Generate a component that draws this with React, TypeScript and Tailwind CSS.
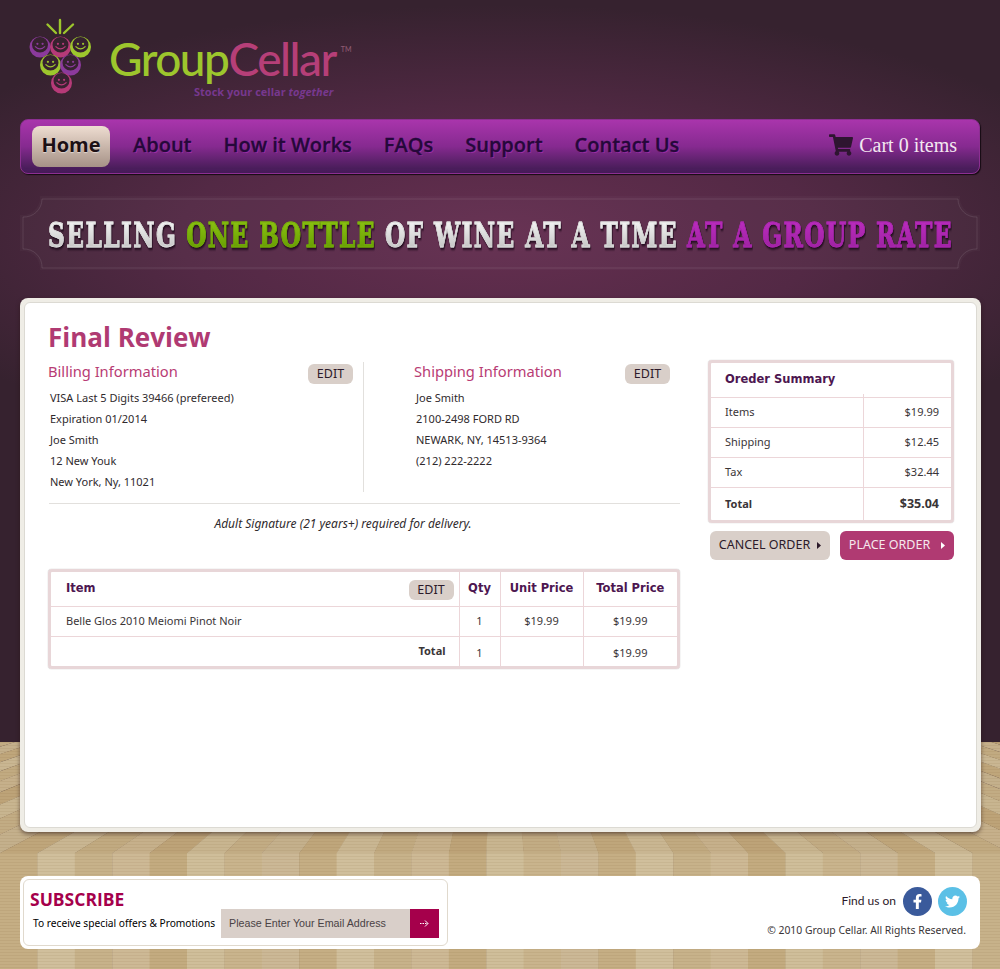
import { FaFacebookF, FaTwitter, FaShoppingCart } from "react-icons/fa";

const navItems = ["About", "How it Works", "FAQs", "Support", "Contact Us"];
const billing = [
  "VISA Last 5 Digits 39466 (prefereed)",
  "Expiration 01/2014",
  "Joe Smith",
  "12 New Youk",
  "New York, Ny, 11021",
];
const shipping = ["Joe Smith", "2100-2498 FORD RD", "NEWARK, NY, 14513-9364", "(212) 222-2222"];
const summary = [
  { label: "Items", value: "$19.99" },
  { label: "Shipping", value: "$12.45" },
  { label: "Tax", value: "$32.44" },
];

const floorColors = ["#d0bf9c", "#c7b28a", "#cdb995", "#c3ab80", "#cfbe9a", "#c9b48d", "#cbb896", "#c5ae84"];
const floorColumns = Array.from({ length: 70 }, (_, n) => n - 20);

function Floor() {
  const step = 37.4;
  const topX = (x: number, k: number) => 500 + (x - 500) * k;
  return (
    <svg className="absolute left-0 top-[742px]" width="1000" height="227" viewBox="0 0 1000 227">
      <defs>
        <pattern id="grain" width="4" height="3" patternUnits="userSpaceOnUse">
          <rect width="4" height="1" fill="#7a5c28" opacity="0.09" />
        </pattern>
      </defs>
      {floorColumns.map((i) => {
        const x0 = i * step;
        const x1 = (i + 1) * step;
        const fill = floorColors[(((i + 7) % 8) + 8) % 8];
        return (
          <g key={i}>
            <rect x={x0} y="111" width={step + 0.5} height="116" fill={fill} />
            <polygon
              points={`${topX(x0, 0.58)},0 ${topX(x1, 0.58) + 0.5},0 ${x1 + 0.5},111 ${x0},111`}
              fill={fill}
            />
          </g>
        );
      })}
      <rect width="1000" height="111" fill="#6b4a10" opacity="0.07" />
      <rect width="1000" height="227" fill="url(#grain)" />
    </svg>
  );
}

function Grape({ x, y, color }: { x: number; y: number; color: string }) {
  return (
    <g transform={`translate(${x} ${y})`} fill={color}>
      <path
        fillRule="evenodd"
        d="M-10.5 0a10.5 10.5 0 1 0 21 0a10.5 10.5 0 1 0 -21 0ZM-8 -2.2a8 7.8 0 1 1 16 0a8 7.8 0 1 1 -16 0Z"
      />
      <circle cx="-2.6" cy="-3.2" r="1.1" />
      <circle cx="2.6" cy="-3.2" r="1.1" />
      <path d="M-5 -0.6Q0 4.4 5 -0.6" fill="none" stroke={color} strokeWidth="1.3" />
    </g>
  );
}

function Logo() {
  return (
    <div className="flex h-[119px] items-start pl-[28px] pt-[15px]">
      <svg width="66" height="84" viewBox="28 15 66 84" className="shrink-0">
        <g stroke="#9dc62d" strokeWidth="2.4" strokeLinecap="round">
          <path d="M60 20V33" />
          <path d="M47.5 24.5L56 33" />
          <path d="M73 24.5L64 33" />
        </g>
        <Grape x={40} y={47} color="#8b3a9c" />
        <Grape x={60.5} y={47} color="#b63a78" />
        <Grape x={80.5} y={47} color="#9dc62d" />
        <Grape x={50.5} y={65} color="#9dc62d" />
        <Grape x={70.5} y={65} color="#8b3a9c" />
        <Grape x={61.5} y={83} color="#b63a78" />
      </svg>
      <div className="ml-[15px] mt-[18px] w-[250px]">
        <div className="flex h-[52px] items-start font-['Lato',sans-serif] text-[46px] font-medium leading-[52px] tracking-[-1.5px]">
          <span className="text-[#9dc62d]">Group</span>
          <span className="text-[#b63f78]">Cellar</span>
          <span className="ml-[5px] mt-[12px] text-[7px] leading-[8px] tracking-normal text-[#8f5a72]">TM</span>
        </div>
        <div className="ml-[85px] whitespace-nowrap font-['Open_Sans',sans-serif] text-[11px] font-bold leading-[14px] text-[#77388e]">
          Stock your cellar <span className="italic">together</span>
        </div>
      </div>
    </div>
  );
}

function Nav() {
  return (
    <nav className="mx-5 flex h-[55px] items-center rounded-lg border border-[#8c2f92] bg-gradient-to-b from-[#a935ac] via-[#862a90] to-[#3e1a50] pl-[11px] pr-[22px] shadow-[1px_1px_1px_#140a12,inset_0_-4px_0_rgba(80,30,100,0.35)]">
      <a className="flex h-[41px] w-[78px] items-center justify-center rounded-lg bg-gradient-to-b from-[#eeddd1] to-[#a69287] pb-[3px] font-['Open_Sans',sans-serif] text-[20px] font-bold text-[#1c1015] [text-shadow:0_1px_1px_rgba(255,255,255,0.5)]">
        Home
      </a>
      <div className="ml-[23px] flex gap-[32px] pb-[3px]">
        {navItems.map((item) => (
          <a
            key={item}
            className="whitespace-nowrap font-['Open_Sans',sans-serif] text-[20px] font-semibold text-[#25083a] [-webkit-text-stroke:0.3px_#25083a] [text-shadow:1px_1px_0_#9b2ea4]"
          >
            {item}
          </a>
        ))}
      </div>
      <div className="ml-auto flex items-center pb-[3px]">
        <FaShoppingCart className="mr-[6px] text-[24px] text-[#2e1530]" />
        <span className="whitespace-nowrap font-['Liberation_Serif',serif] text-[20px] text-[#f3e8f0]">Cart 0 items</span>
      </div>
    </nav>
  );
}

function Banner() {
  const clip = "bg-clip-text text-transparent";
  return (
    <div className="relative mx-5 mt-[22px] flex h-[74px] items-center justify-center overflow-hidden pt-[4px]">
      <svg className="absolute inset-0" width="960" height="74" viewBox="0 0 960 74">
        <path
          d="M20 0H940a18 18 0 0 0 20 19V55a18 18 0 0 0 -20 19H20a18 18 0 0 0 -20 -19V19a18 18 0 0 0 20 -19Z"
          fill="#ffffff"
          fillOpacity="0.025"
        />
        <path
          d="M22 3H938a18 18 0 0 0 19 18V53a18 18 0 0 0 -19 19H22a18 18 0 0 0 -19 -19V21a18 18 0 0 0 19 -18Z"
          fill="none"
          stroke="#ffffff"
          strokeOpacity="0.1"
        />
      </svg>
      <div className="relative flex shrink-0 scale-x-[0.686] gap-[13px] whitespace-nowrap font-['DejaVu_Serif',serif] text-[34px] font-bold leading-[40px] tracking-[2px] drop-shadow-[1px_2px_1px_rgba(20,5,20,0.8)]">
        <span className={`bg-gradient-to-b from-[#ffffff] to-[#b9b9b9] ${clip} [-webkit-text-stroke:0.8px_#dcdcdc]`}>SELLING</span>
        <span className={`bg-gradient-to-b from-[#93c915] to-[#5f9600] ${clip} [-webkit-text-stroke:0.8px_#76ae0a]`}>ONE BOTTLE</span>
        <span className={`bg-gradient-to-b from-[#ffffff] to-[#b9b9b9] ${clip} [-webkit-text-stroke:0.8px_#dcdcdc]`}>OF WINE AT A TIME</span>
        <span className={`bg-gradient-to-b from-[#c02ec4] to-[#98209c] ${clip} [-webkit-text-stroke:0.8px_#ab27af]`}>AT A GROUP RATE</span>
      </div>
    </div>
  );
}

function EditButton() {
  return (
    <span className="flex h-[20px] w-[45px] items-center justify-center rounded-md bg-[#d9cfc9] text-[12.5px] text-[#2c1a2a]">
      EDIT
    </span>
  );
}

function InfoBlock({ title, lines }: { title: string; lines: string[] }) {
  return (
    <div>
      <div className="flex items-start justify-between">
        <h2 className="-mt-[1px] text-[14.7px] leading-[20px] text-[#b83c74]">{title}</h2>
        <div className="mt-[2px]">
          <EditButton />
        </div>
      </div>
      <div className="ml-[2px] mt-[3px] text-[11px] leading-[21px] text-[#2f2a2d]">
        {lines.map((line) => (
          <div key={line} className="whitespace-nowrap">
            {line}
          </div>
        ))}
      </div>
    </div>
  );
}

function ItemsTable() {
  const head = "border-b border-l border-[#ecd6d9] text-center font-['DejaVu_Sans',sans-serif] text-[11.5px] font-bold text-[#4d1650]";
  const cell = "border-l border-t border-[#ecd6d9] text-center text-[11px] text-[#3a3537]";
  return (
    <div className="mt-[37px] w-[632px] rounded-sm border-[3px] border-[#e8d6d8] shadow-[0_0_1px_#999]">
      <table className="w-full table-fixed border-collapse">
        <colgroup>
          <col className="w-[408px]" />
          <col className="w-[41px]" />
          <col className="w-[83px]" />
          <col />
        </colgroup>
        <tbody>
          <tr className="h-[34px]">
            <td className="border-b border-[#ecd6d9] pl-[15px] pr-[5px] font-['DejaVu_Sans',sans-serif] text-[11.5px] font-bold text-[#4d1650]">
              <div className="flex items-center justify-between">
                <span>Item</span>
                <span className="mt-[3px] font-['Noto_Sans',sans-serif] font-normal">
                  <EditButton />
                </span>
              </div>
            </td>
            <td className={head}>Qty</td>
            <td className={head}>Unit Price</td>
            <td className={head}>Total Price</td>
          </tr>
          <tr className="h-[30px]">
            <td className="pl-[15px] text-[11px] text-[#3a3537]">Belle Glos 2010 Meiomi Pinot Noir</td>
            <td className={cell}>1</td>
            <td className={cell}>$19.99</td>
            <td className={cell}>$19.99</td>
          </tr>
          <tr className="h-[30px]">
            <td className="border-t border-[#ecd6d9] pr-[13px] text-right text-[11px] font-bold text-[#3a3537]">Total</td>
            <td className={`${cell} pt-[3px]`}>1</td>
            <td className={cell}></td>
            <td className={`${cell} pt-[3px]`}>$19.99</td>
          </tr>
        </tbody>
      </table>
    </div>
  );
}

function OrderSummary() {
  return (
    <div>
      <div className="w-[246px] rounded-sm border-[3px] border-[#e8d6d8] shadow-[0_0_1px_#aaa]">
        <div className="relative flex h-[34px] items-center pl-[14px] font-['DejaVu_Sans',sans-serif] text-[11.5px] font-bold text-[#4d1650]">
          Oreder Summary
          <span className="absolute bottom-0 left-[152px] h-[3px] border-l border-[#ecd6d9]" />
        </div>
        {summary.map((row) => (
          <div key={row.label} className="flex h-[30px] border-t border-[#ecd6d9] text-[11px] text-[#3a3537]">
            <div className="flex w-[152px] items-center pl-[14px]">{row.label}</div>
            <div className="flex flex-1 items-center justify-end border-l border-[#ecd6d9] pr-[12px]">{row.value}</div>
          </div>
        ))}
        <div className="flex h-[33px] border-t border-[#ecd6d9] font-bold text-[#3a3537]">
          <div className="flex w-[152px] items-center pl-[14px] text-[11px]">Total</div>
          <div className="flex flex-1 items-center justify-end border-l border-[#ecd6d9] pr-[12px] text-[12.5px]">$35.04</div>
        </div>
      </div>
      <div className="ml-[2px] mt-[8px] flex gap-[10px]">
        <a className="flex h-[29px] w-[120px] items-center justify-center gap-[7px] rounded-md bg-[#d9cfc9] text-[12.5px] text-[#2c1a2a]">
          CANCEL ORDER
          <svg width="4" height="7" viewBox="0 0 4 7">
            <path d="M0 0L4 3.5L0 7Z" fill="#2c1a2a" />
          </svg>
        </a>
        <a className="flex h-[29px] w-[114px] items-center justify-center gap-[11px] rounded-md bg-[#b03a72] text-[12.5px] text-[#f5e8ee]">
          PLACE ORDER
          <svg width="4" height="7" viewBox="0 0 4 7">
            <path d="M0 0L4 3.5L0 7Z" fill="#ffffff" />
          </svg>
        </a>
      </div>
    </div>
  );
}

function Card() {
  return (
    <main className="mx-5 mt-[28px] h-[534px] w-[961px] rounded-lg bg-[#efede6] p-[4px] shadow-[0_2px_4px_rgba(40,20,20,0.55)]">
      <div className="flex h-full rounded-md border border-[#dcdad3] bg-white pl-[23px] pr-[22px]">
        <div className="w-[632px] shrink-0">
          <h1 className="mt-[16px] font-['Open_Sans',sans-serif] text-[26px] font-bold leading-[36px] text-[#b03a72]">
            Final Review
          </h1>
          <div className="mt-[7px] flex h-[130px]">
            <div className="w-[316px] border-r border-[#e2e0dd] pr-[10px]">
              <InfoBlock title="Billing Information" lines={billing} />
            </div>
            <div className="ml-[50px] w-[256px]">
              <InfoBlock title="Shipping Information" lines={shipping} />
            </div>
          </div>
          <div className="ml-[1px] mt-[11px] border-t border-[#e2e0dd] pr-[43px] pt-[12px] text-center text-[12px] italic leading-[16px] text-[#2f2a2d]">
            Adult Signature (21 years+) required for delivery.
          </div>
          <ItemsTable />
        </div>
        <div className="ml-[28px] mt-[57px]">
          <OrderSummary />
        </div>
      </div>
    </main>
  );
}

function Footer() {
  return (
    <footer className="mx-5 mt-[44px] flex h-[73px] items-center justify-between rounded-lg bg-white pl-[3px] pr-[13px]">
      <div className="h-[67px] w-[425px] rounded-md border border-[#e0d9cd] pl-[6px] pt-[7px]">
        <div className="font-['Open_Sans',sans-serif] text-[17.5px] font-bold leading-[24px] text-[#a5004b]">SUBSCRIBE</div>
        <div className="-mt-[2px] flex items-center">
          <span className="ml-[3px] w-[188px] whitespace-nowrap text-[10.2px] text-black">To receive special offers &amp; Promotions</span>
          <div className="flex h-[29px] w-[218px]">
            <div className="flex flex-1 items-center bg-[#d9cfc9] pl-[8px] font-['Liberation_Sans',sans-serif] text-[10.7px] text-[#4a4245]">
              Please Enter Your Email Address
            </div>
            <div className="flex w-[29px] items-center justify-center bg-[#a5004b]">
              <svg width="9" height="7" viewBox="0 0 9 7" fill="none" stroke="#fff" strokeWidth="1">
                <path d="M0 3.5H8" strokeDasharray="1.5 1" />
                <path d="M5 0.5L8 3.5L5 6.5" />
              </svg>
            </div>
          </div>
        </div>
      </div>
      <div className="flex flex-col items-end">
        <div className="flex items-center">
          <span className="mr-[7px] font-['Lato',sans-serif] text-[12px] text-[#2c1a2a]">Find us on</span>
          <span className="flex h-[29px] w-[29px] items-center justify-center rounded-full bg-[#3a5a9b] text-[15px] text-white">
            <FaFacebookF />
          </span>
          <span className="ml-[6px] flex h-[29px] w-[29px] items-center justify-center rounded-full bg-[#5bc0e6] text-[15px] text-white">
            <FaTwitter />
          </span>
        </div>
        <div className="mr-[1px] mt-[7px] whitespace-nowrap text-[10.4px] text-[#3a3537]">© 2010 Group Cellar. All Rights Reserved.</div>
      </div>
    </footer>
  );
}

export default function App() {
  return (
    <div className="relative h-[969px] w-full overflow-hidden bg-[radial-gradient(ellipse_640px_230px_at_500px_235px,#652f50_0%,#532945_50%,#36222f_100%)] font-['Noto_Sans',sans-serif]">
      <Floor />
      <div className="relative">
        <Logo />
        <Nav />
        <Banner />
        <Card />
        <Footer />
      </div>
    </div>
  );
}
